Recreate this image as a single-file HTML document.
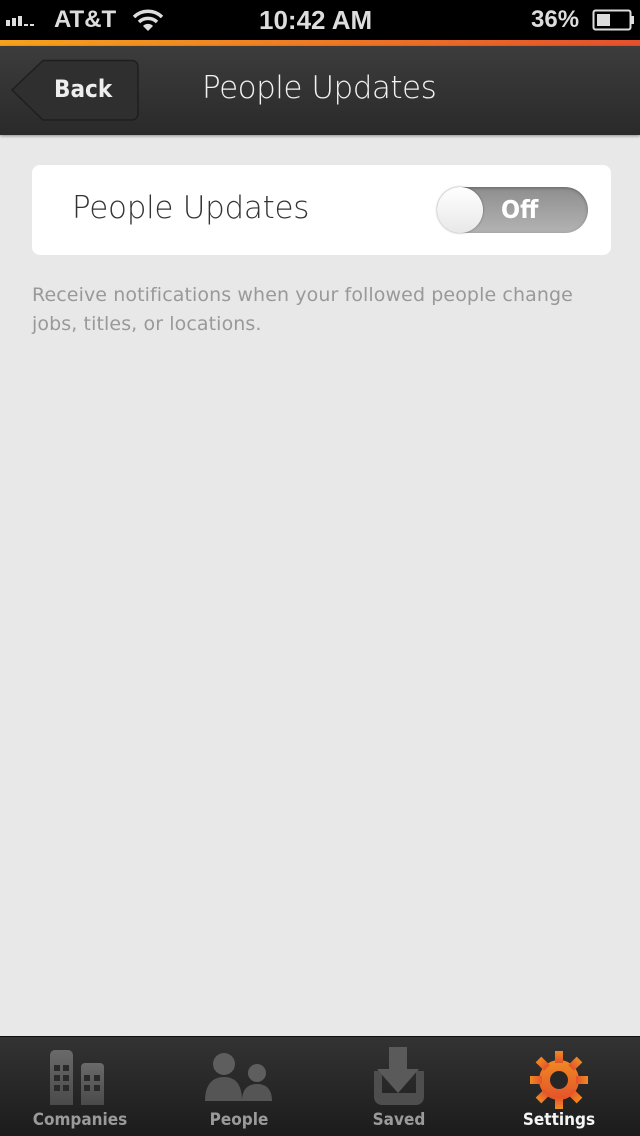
<!DOCTYPE html>
<html><head><meta charset="utf-8"><style>
*{margin:0;padding:0;box-sizing:border-box}
body{width:640px;height:1136px;background:#e8e8e8;font-family:"DejaVu Sans","Liberation Sans",sans-serif;position:relative;overflow:hidden}
.status{position:absolute;top:0;left:0;width:640px;height:40px;background:#000;color:#ddd;font-family:"Liberation Sans",sans-serif;font-weight:bold;font-size:24px}
.orange{position:absolute;top:40px;left:0;width:640px;height:6px;background:linear-gradient(90deg,#f6a21c,#ee7a24 50%,#e5502c)}
.nav{position:absolute;top:46px;left:0;width:640px;height:89px;background:linear-gradient(#3c3c3c,#2a2a2a);box-shadow:0 1px 3px rgba(0,0,0,.4)}
.title{position:absolute;left:202px;top:24px;color:#f2f2f2;font-size:31px;font-weight:300;letter-spacing:-0.5px}
.card{position:absolute;left:32px;top:165px;width:579px;height:90px;background:#fff;border-radius:8px}
.card .lbl{position:absolute;left:40px;top:25px;font-size:31px;color:#333;font-weight:300;letter-spacing:-0.3px}
.tog{position:absolute;left:405px;top:22px;width:151px;height:46px;border-radius:23px;background:linear-gradient(#8e8e8e,#b3b3b3);box-shadow:inset 0 1px 3px rgba(0,0,0,.3)}
.tog span{position:absolute;left:64px;top:8px;color:#fff;font-size:25px;font-weight:bold;font-family:"DejaVu Sans Condensed","DejaVu Sans",sans-serif}
.knob{position:absolute;left:0;top:0;width:46px;height:46px;border-radius:50%;background:linear-gradient(#fff,#e8e8e8);box-shadow:0 0 2px rgba(0,0,0,.4)}
.desc{position:absolute;left:32px;top:281px;width:580px;font-size:19px;line-height:29px;color:#999;letter-spacing:0.1px}
.tab{position:absolute;top:1036px;left:0;width:640px;height:100px;background:linear-gradient(#333,#1c1c1c);border-top:1px solid #111}
.tl{position:absolute;top:73px;font-size:17px;color:#9a9a9a;font-weight:bold;font-family:"DejaVu Sans Condensed","DejaVu Sans",sans-serif;text-align:center;width:160px}
</style></head><body>
<div class="status">
<svg style="position:absolute;left:6px;top:14px" width="44" height="16"><rect x="0" y="6" width="4" height="6" fill="#ddd"/><rect x="6" y="4" width="4" height="8" fill="#ddd"/><rect x="12" y="2" width="4" height="10" fill="#ddd"/><rect x="18" y="10" width="4" height="2" fill="#ddd"/><rect x="24" y="10" width="4" height="2" fill="#ddd"/></svg>
<span style="position:absolute;left:54px;top:6px">AT&amp;T</span>
<svg style="position:absolute;left:132px;top:8px" width="32" height="24" viewBox="0 0 32 24"><path d="M2 9 A20 20 0 0 1 30 9" stroke="#ddd" stroke-width="3.5" fill="none"/><path d="M7 14 A13 13 0 0 1 25 14" stroke="#ddd" stroke-width="3.5" fill="none"/><path d="M11 18 L16 23 L21 18 A7 7 0 0 0 11 18Z" fill="#ddd"/></svg>
<span style="position:absolute;left:259px;top:5px;font-size:26px">10:42 AM</span>
<span style="position:absolute;left:531px;top:6px">36%</span>
<svg style="position:absolute;left:592px;top:9px" width="44" height="22"><rect x="1.5" y="1.5" width="37" height="19" rx="2" fill="none" stroke="#ddd" stroke-width="2"/><rect x="5" y="5" width="13" height="12" fill="#ddd"/><rect x="39" y="7" width="3" height="8" fill="#ddd"/></svg>
</div>
<div class="orange"></div>
<div class="nav">
<svg style="position:absolute;left:10px;top:13px" width="130" height="64"><path d="M33 1.5 H122 a6 6 0 0 1 6 6 V55 a6 6 0 0 1 -6 6 H33 L2 31 Z" fill="#2f2f2f" stroke="#1f1f1f" stroke-width="1.5"/></svg>
<span style="position:absolute;left:54px;top:29px;color:#eee;font-size:24px;font-weight:bold;font-family:'DejaVu Sans Condensed','DejaVu Sans',sans-serif">Back</span>
<div class="title">People Updates</div>
</div>
<div class="card"><div class="lbl">People Updates</div><div class="tog"><span>Off</span><div class="knob"></div></div></div>
<div class="desc">Receive notifications when your followed people change jobs, titles, or locations.</div>
<div class="tab">
<svg style="position:absolute;left:48px;top:12px" width="62" height="56"><defs><linearGradient id="g" x1="0" y1="0" x2="0" y2="1"><stop offset="0" stop-color="#6a6a6a"/><stop offset="1" stop-color="#4a4a4a"/></linearGradient></defs><path d="M2 6 a5 5 0 0 1 5 -5 h13 a5 5 0 0 1 5 5 V56 H2Z" fill="url(#g)"/><path d="M33 18 a4 4 0 0 1 4 -4 h15 a4 4 0 0 1 4 4 V56 H33Z" fill="url(#g)"/><g fill="#2a2a2a"><rect x="6" y="16" width="6" height="6"/><rect x="15" y="16" width="6" height="6"/><rect x="6" y="26" width="6" height="6"/><rect x="15" y="26" width="6" height="6"/><rect x="6" y="36" width="6" height="6"/><rect x="15" y="36" width="6" height="6"/><rect x="36" y="26" width="6" height="6"/><rect x="46" y="26" width="6" height="6"/><rect x="36" y="36" width="6" height="6"/><rect x="46" y="36" width="6" height="6"/></g></svg>
<svg style="position:absolute;left:204px;top:14px" width="72" height="52"><circle cx="20" cy="13" r="11" fill="#5e5e5e"/><path d="M1 50 C1 34 8 26 20 26 C32 26 38 34 38 50Z" fill="#555"/><circle cx="53" cy="22" r="9" fill="#5e5e5e"/><path d="M38 50 C38 38 44 33 53 33 C62 33 68 38 68 50Z" fill="#555"/></svg>
<svg style="position:absolute;left:372px;top:10px" width="56" height="60"><path d="M2 24 V50 a8 8 0 0 0 8 8 H44 a8 8 0 0 0 8 -8 V24 H44 V46 H10 V24Z" fill="#4e4e4e"/><path d="M17 0 H35 V22 H47 L26 46 L5 22 H17Z" fill="#5a5a5a"/></svg>
<svg style="position:absolute;left:528px;top:12px" width="62" height="62" viewBox="-31 -31 62 62"><defs><linearGradient id="o" x1="0" y1="0" x2="0" y2="1"><stop offset="0" stop-color="#f08a22"/><stop offset="1" stop-color="#e4522a"/></linearGradient></defs><g fill="url(#o)"><circle r="20"/><g id="t"><rect x="-4" y="-29" width="8" height="12"/></g><use href="#t" transform="rotate(45)"/><use href="#t" transform="rotate(90)"/><use href="#t" transform="rotate(135)"/><use href="#t" transform="rotate(180)"/><use href="#t" transform="rotate(225)"/><use href="#t" transform="rotate(270)"/><use href="#t" transform="rotate(315)"/></g><circle r="9" fill="#262626"/></svg>
<div class="tl" style="left:0">Companies</div>
<div class="tl" style="left:159px">People</div>
<div class="tl" style="left:319px">Saved</div>
<div class="tl" style="left:479px;color:#f4f4f4">Settings</div>
</div>
</body></html>
